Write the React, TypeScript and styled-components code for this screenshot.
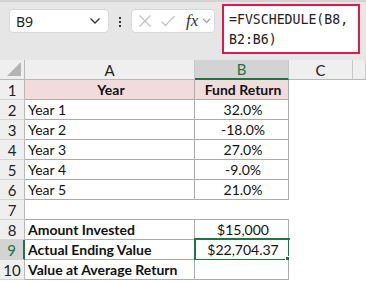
import styled, { createGlobalStyle } from 'styled-components';

const GlobalStyle = createGlobalStyle`
  body {
    margin: 0;
    background: #ffffff;
    overflow: hidden;
  }
`;

const GREEN = '#217346';
const GRID = '#ababab';

type CellData = {
  text?: string;
  bold?: boolean;
  center?: boolean;
  pink?: boolean;
  boxed?: boolean;
  selected?: boolean;
};

const rows: CellData[][] = [
  [{ text: 'Year', bold: true, center: true, pink: true, boxed: true }, { text: 'Fund Return', bold: true, center: true, pink: true, boxed: true }],
  [{ text: 'Year 1', boxed: true }, { text: '32.0%', center: true, boxed: true }],
  [{ text: 'Year 2', boxed: true }, { text: '-18.0%', center: true, boxed: true }],
  [{ text: 'Year 3', boxed: true }, { text: '27.0%', center: true, boxed: true }],
  [{ text: 'Year 4', boxed: true }, { text: '-9.0%', center: true, boxed: true }],
  [{ text: 'Year 5', boxed: true }, { text: '21.0%', center: true, boxed: true }],
  [{}, {}],
  [{ text: 'Amount Invested', bold: true, boxed: true }, { text: '$15,000', center: true, boxed: true }],
  [{ text: 'Actual Ending Value', bold: true, boxed: true }, { text: '$22,704.37', center: true, boxed: true, selected: true }],
  [{ text: 'Value at Average Return', bold: true, boxed: true }, { boxed: true }],
];

const App = () => {
  return (
    <>
      <GlobalStyle />
      <Toolbar>
        <NameBox>
          <NameText>B9</NameText>
          <svg width="12" height="8" viewBox="0 0 12 8">
            <path d="M1.5 1.5 L6 6 L10.5 1.5" fill="none" stroke="#333" strokeWidth="1.3" />
          </svg>
        </NameBox>
        <Dots>
          <span />
          <span />
          <span />
        </Dots>
        <FxBox>
          <svg width="14" height="14" viewBox="0 0 14 14">
            <path d="M1.5 1.5 L12.5 12.5 M12.5 1.5 L1.5 12.5" stroke="#c4c4c4" strokeWidth="1.3" />
          </svg>
          <svg width="16" height="14" viewBox="0 0 16 14">
            <path d="M1.5 7.5 L5.5 11.5 L14.5 2" fill="none" stroke="#c4c4c4" strokeWidth="1.3" />
          </svg>
          <FxText>fx</FxText>
          <svg width="9" height="6" viewBox="0 0 9 6">
            <path d="M1 1 L4.5 4.5 L8 1" fill="none" stroke="#9a9a9a" strokeWidth="1.1" />
          </svg>
        </FxBox>
        <FormulaBox>
          =FVSCHEDULE(B8,
          <br />
          B2:B6)
        </FormulaBox>
      </Toolbar>
      <Sheet>
        <Corner>
          <svg width="14" height="14" viewBox="0 0 14 14">
            <polygon points="14,0 14,14 0,14" fill="#b4b4b4" />
          </svg>
        </Corner>
        <ColHead>A</ColHead>
        <ColHead $active>B</ColHead>
        <ColHead>C</ColHead>
        <ColHead />
        {rows.map((row, i) => (
          <Row key={i} index={i + 1} cells={row} />
        ))}
      </Sheet>
    </>
  );
};

const Row = ({ index, cells }: { index: number; cells: CellData[] }) => {
  const active = cells.some((c) => c.selected);
  const nextBoxed = index === 7;
  return (
    <>
      <RowHead $active={active}>{index}</RowHead>
      {cells.map((c, j) => (
        <Cell
          key={j}
          $bold={c.bold}
          $center={c.center}
          $pink={c.pink}
          $boxed={c.boxed}
          $bottomOnly={nextBoxed}
        >
          {c.text}
          {c.selected && (
            <Selection>
              <FillHandle />
            </Selection>
          )}
        </Cell>
      ))}
      <Cell />
      <Cell />
    </>
  );
};

export default App;

const Toolbar = styled.div`
  display: flex;
  align-items: flex-start;
  height: 60px;
  box-sizing: border-box;
  padding-left: 9px;
  background: #e6e6e6;
  border-top: 2px solid #d3d3d3;
`;

const NameBox = styled.div`
  display: flex;
  align-items: center;
  justify-content: space-between;
  width: 100px;
  height: 24px;
  margin-top: 7px;
  box-sizing: border-box;
  padding: 0 7px 0 6px;
  background: #ffffff;
  border: 1px solid #d8d8d8;
  border-radius: 4px;
`;

const NameText = styled.span`
  font-family: 'Noto Sans', sans-serif;
  font-size: 14px;
  color: #222;
`;

const Dots = styled.div`
  display: flex;
  flex-direction: column;
  align-items: center;
  gap: 2px;
  width: 22px;
  margin-top: 15px;

  span {
    width: 2px;
    height: 2px;
    background: #333;
  }
`;

const FxBox = styled.div`
  display: flex;
  align-items: center;
  gap: 8px;
  width: 84px;
  height: 24px;
  margin-top: 7px;
  box-sizing: border-box;
  padding-left: 6px;
  background: #ffffff;
  border: 1px solid #d8d8d8;
  border-radius: 4px;
`;

const FxText = styled.span`
  font-family: 'Liberation Serif', serif;
  font-style: italic;
  font-size: 17px;
  color: #333;
  margin-left: 2px;
  margin-right: -4px;
`;

const FormulaBox = styled.div`
  width: 138px;
  height: 50px;
  margin-top: 2px;
  margin-left: 7px;
  box-sizing: border-box;
  padding: 4px 0 0 5px;
  background: #ffffff;
  border: 2px solid #e0194c;
  font-family: 'DejaVu Sans Mono', monospace;
  font-size: 13.2px;
  line-height: 20px;
  color: #222;
  white-space: nowrap;
`;

const Sheet = styled.div`
  display: grid;
  grid-template-columns: 25px 170px 94px 64px 1fr;
  grid-auto-rows: 20px;
  background: #ffffff;
  font-family: Lato, 'Liberation Sans', sans-serif;
  font-size: 14px;
  color: #111;
`;

const Corner = styled.div`
  display: flex;
  align-items: flex-end;
  justify-content: flex-end;
  padding: 0 3px 3px 0;
  background: #efefef;
  border-right: 1px solid #b8b8b8;
  border-bottom: 1px solid #b8b8b8;
`;

const ColHead = styled.div<{ $active?: boolean }>`
  display: flex;
  align-items: center;
  justify-content: center;
  box-sizing: border-box;
  font-size: 15px;
  background: ${(p) => (p.$active ? '#d3d3d3' : '#efefef')};
  color: ${(p) => (p.$active ? GREEN : '#222')};
  border-right: 1px solid #c8c8c8;
  border-bottom: ${(p) => (p.$active ? `2px solid ${GREEN}` : '1px solid #b8b8b8')};
`;

const RowHead = styled.div<{ $active?: boolean }>`
  display: flex;
  align-items: center;
  justify-content: center;
  box-sizing: border-box;
  background: ${(p) => (p.$active ? '#d3d3d3' : '#efefef')};
  color: ${(p) => (p.$active ? GREEN : '#222')};
  border-right: ${(p) => (p.$active ? `2px solid ${GREEN}` : '1px solid #b8b8b8')};
  border-bottom: 1px solid #d4d4d4;
  font-size: 15px;
`;

const Cell = styled.div<{
  $bold?: boolean;
  $center?: boolean;
  $pink?: boolean;
  $boxed?: boolean;
  $bottomOnly?: boolean;
}>`
  position: relative;
  display: flex;
  align-items: center;
  justify-content: ${(p) => (p.$center ? 'center' : 'flex-start')};
  box-sizing: border-box;
  padding-left: 3px;
  white-space: nowrap;
  font-weight: ${(p) => (p.$bold ? 700 : 400)};
  background: ${(p) => (p.$pink ? '#f2dcdb' : '#ffffff')};
  border-right: ${(p) => (p.$boxed ? `1px solid ${GRID}` : 'none')};
  border-bottom: ${(p) => (p.$boxed || p.$bottomOnly ? `1px solid ${GRID}` : 'none')};
`;

const Selection = styled.div`
  position: absolute;
  left: -1px;
  top: -2px;
  right: -2px;
  bottom: -2px;
  border: 2px solid ${GREEN};
  pointer-events: none;
`;

const FillHandle = styled.div`
  position: absolute;
  right: -5px;
  bottom: -5px;
  width: 6px;
  height: 6px;
  background: ${GREEN};
  border: 1px solid #ffffff;
`;
